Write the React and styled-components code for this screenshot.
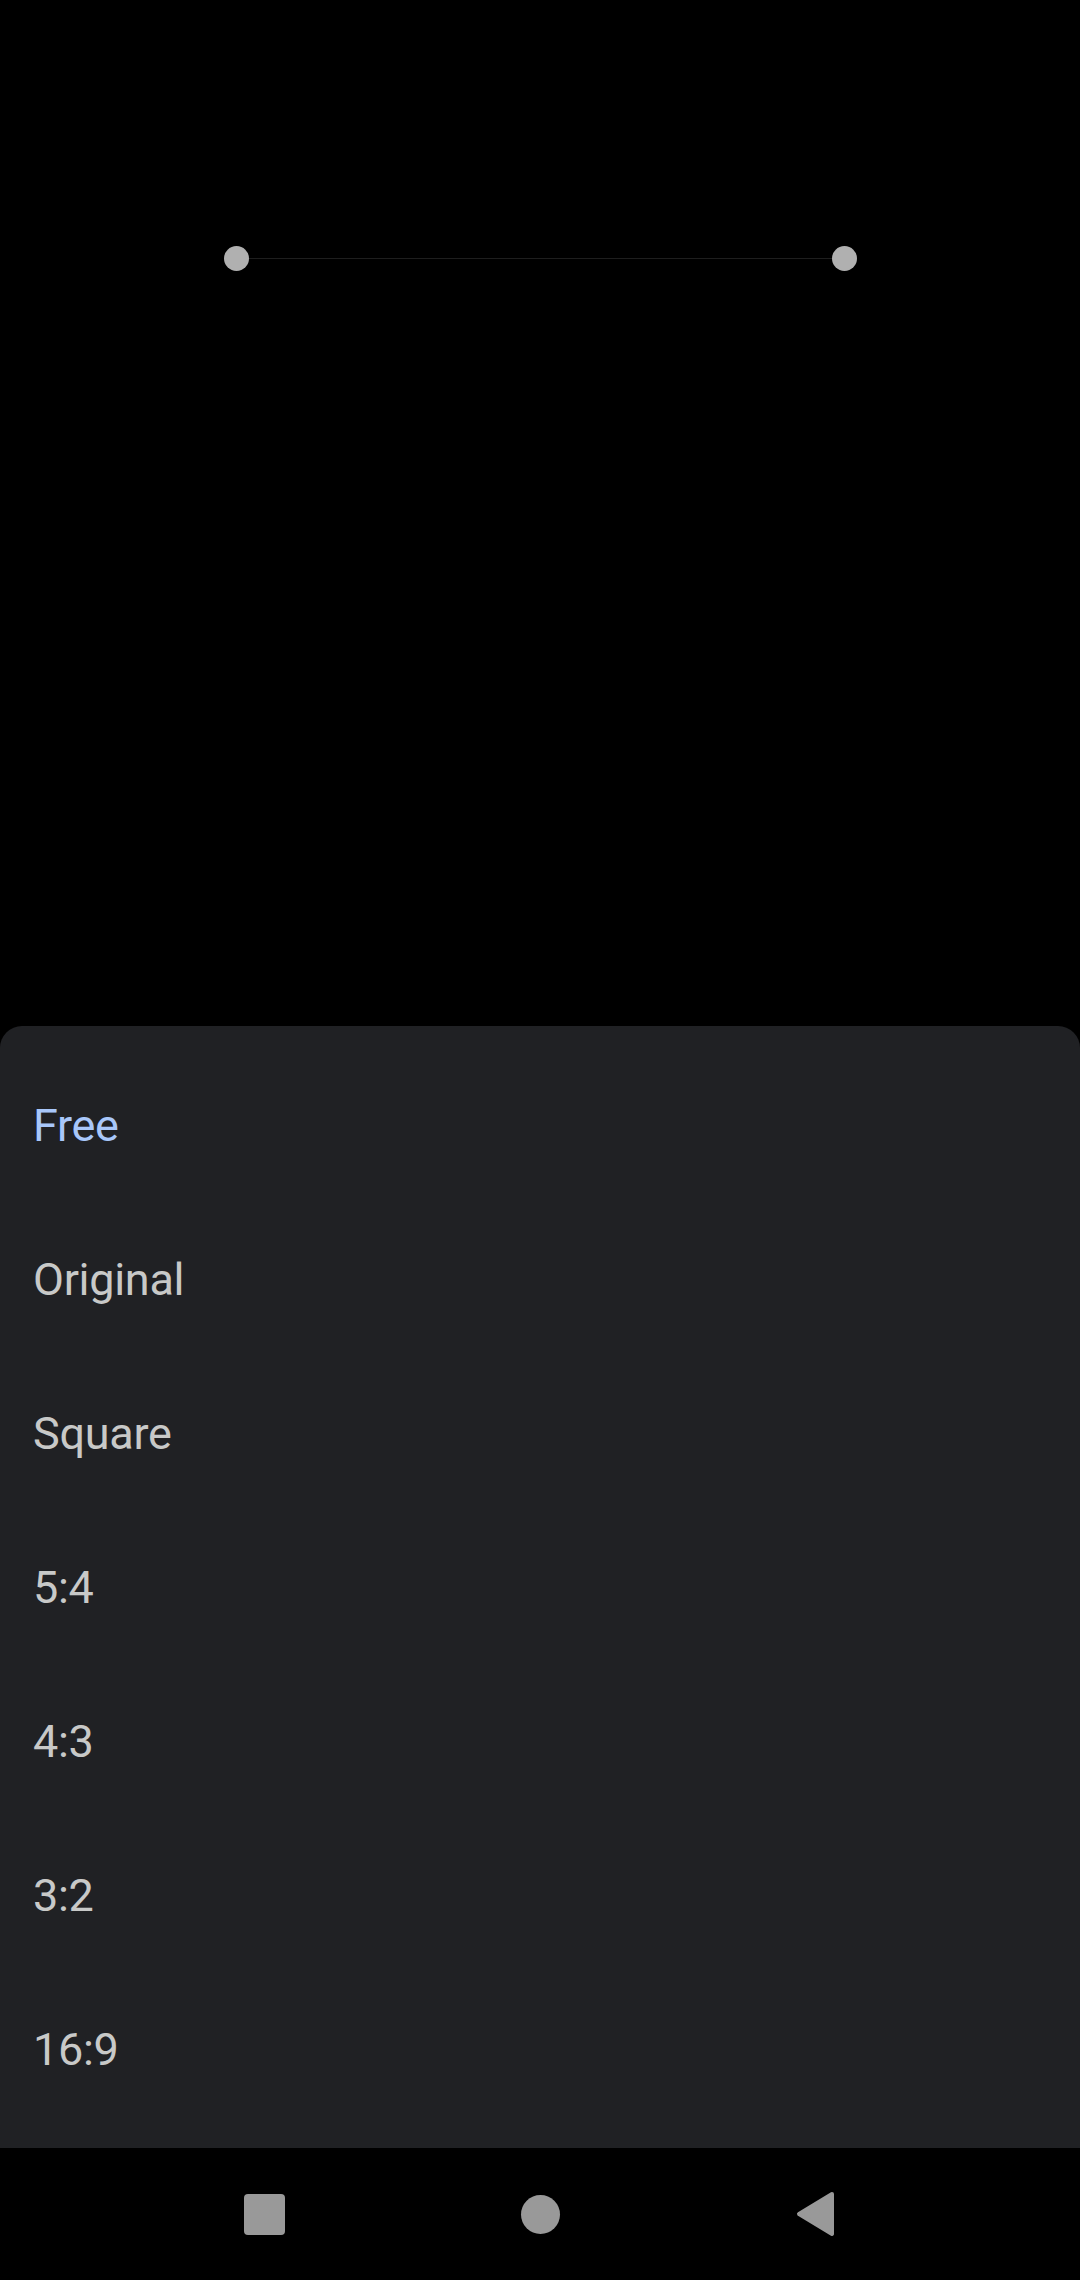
import React from 'react';
import styled, { createGlobalStyle } from 'styled-components';

const Global = createGlobalStyle`
	html, body {
		margin: 0;
		padding: 0;
		background: #000;
	}
	body {
		font-family: Roboto, "Noto Sans", sans-serif;
	}
`;

const ratios = ['Free', 'Original', 'Square', '5:4', '4:3', '3:2', '16:9'];

const App = () => {
	return (
		<Screen>
			<Global/>
			<Canvas>
				<CropEdge>
					<Handle/>
					<EdgeLine/>
					<Handle/>
				</CropEdge>
			</Canvas>
			<Sheet>
				{ratios.map((r, i) => (
					<Option key={r} selected={i === 0}>{r}</Option>
				))}
			</Sheet>
			<NavBar>
				<NavButton>
					<RecentsIcon/>
				</NavButton>
				<NavButton>
					<HomeIcon/>
				</NavButton>
				<NavButton>
					<svg width="40" height="46" viewBox="0 0 40 46">
						<path d="M36 3 L3 23 L36 43 Z" fill="#999999" stroke="#999999" strokeWidth="4" strokeLinejoin="round"/>
					</svg>
				</NavButton>
			</NavBar>
		</Screen>
	);
};

const Screen = styled.div`
	width: 1080px;
	height: 2280px;
	display: flex;
	flex-direction: column;
	background: #000;
	overflow: hidden;
`;

const Canvas = styled.div`
	height: 1026px;
	flex-shrink: 0;
`;

const CropEdge = styled.div`
	display: flex;
	align-items: center;
	padding: 246px 0 0 224px;
`;

const Handle = styled.div`
	width: 25px;
	height: 25px;
	border-radius: 50%;
	background: #b0b0b0;
	flex-shrink: 0;
`;

const EdgeLine = styled.div`
	width: 583px;
	height: 1px;
	background: #1e1e1e;
`;

const Sheet = styled.div`
	background: #202124;
	border-radius: 22px 22px 0 0;
	padding: 22px 0;
	display: flex;
	flex-direction: column;
`;

const Option = styled.div`
	height: 154px;
	display: flex;
	align-items: center;
	padding-left: 33px;
	font-size: 45px;
	letter-spacing: -0.3px;
	color: ${p => (p.selected ? '#a8c7fa' : '#c8c9c8')};
`;

const NavBar = styled.div`
	flex: 1;
	display: flex;
	justify-content: center;
	align-items: center;
	background: #000;
`;

const NavButton = styled.div`
	width: 276px;
	display: flex;
	justify-content: center;
	align-items: center;
`;

const RecentsIcon = styled.div`
	width: 41px;
	height: 41px;
	border-radius: 4px;
	background: #999999;
`;

const HomeIcon = styled.div`
	width: 39px;
	height: 39px;
	border-radius: 50%;
	background: #999999;
`;

export default App;
